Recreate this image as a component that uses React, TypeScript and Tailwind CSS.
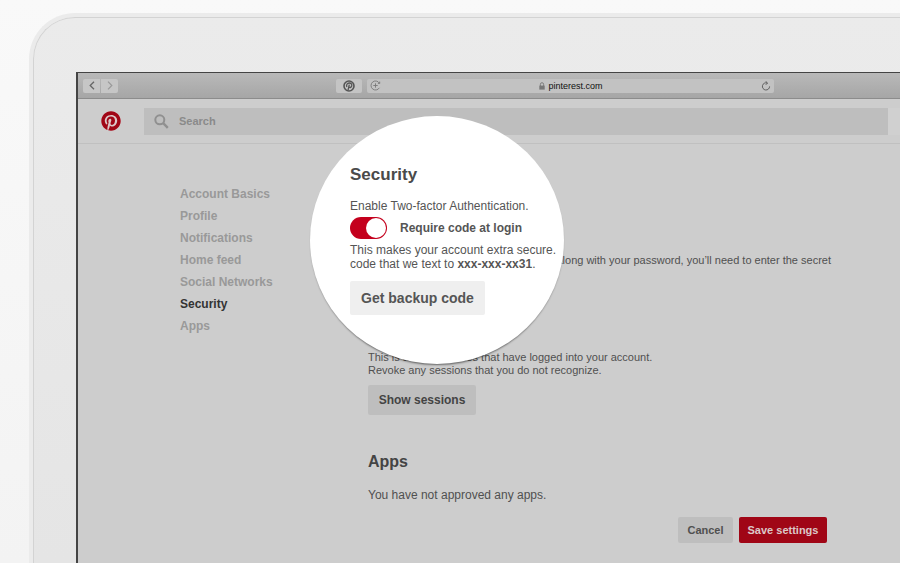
import { FaPinterest } from "react-icons/fa";

const navItems = [
  "Account Basics",
  "Profile",
  "Notifications",
  "Home feed",
  "Social Networks",
  "Security",
  "Apps",
];

function BrowserBar() {
  return (
    <div className="flex h-[26px] items-center border-b border-[#8c8c8c] bg-linear-to-b from-[#b9b9b9] to-[#a6a6a6] pl-[5px] pr-[126px]">
      <div className="flex gap-px">
        <button
          aria-label="Back"
          className="flex h-[14px] w-[17px] items-center justify-center rounded-l-xs bg-[#c6c6c6] text-[#666]"
        >
          <svg width="6" height="9" viewBox="0 0 6 9" fill="none" stroke="currentColor" strokeWidth="1.3">
            <path d="M5 .7 1.2 4.5 5 8.3" />
          </svg>
        </button>
        <button
          aria-label="Forward"
          className="flex h-[14px] w-[17px] items-center justify-center rounded-r-xs bg-[#c6c6c6] text-[#999]"
        >
          <svg width="6" height="9" viewBox="0 0 6 9" fill="none" stroke="currentColor" strokeWidth="1.2">
            <path d="M1 .7 4.8 4.5 1 8.3" />
          </svg>
        </button>
      </div>

      <button
        aria-label="Pin this page"
        className="ml-[218px] flex h-[14px] w-[26px] items-center justify-center rounded-xs bg-[#c4c4c4] text-[#555]"
      >
        <svg width="12" height="12" viewBox="0 0 12 12" fill="none" stroke="currentColor">
          <circle cx="6" cy="6" r="5" strokeWidth="1.6" />
          <path
            d="M3.9 7C2.9 5 4.2 3 6.2 3s3 1.4 2.5 3c-.5 1.7-2.3 2-2.7.9M6.3 4.7 5 10.3"
            strokeWidth="1.3"
          />
        </svg>
      </button>

      {/* Address bar */}
      <div className="ml-[5px] flex h-[14px] flex-1 items-center justify-between rounded-xs bg-[#c2c2c2] px-[3px]">
        <svg width="11" height="11" viewBox="0 0 11 11" fill="none" stroke="#777" strokeWidth="0.9">
          <path d="M9.4 3.2A4.5 4.5 0 1 0 9.4 7.8M5.5 3.3v4.4M3.3 5.5h4.4" />
          <path d="M7.9 3.4h1.8V1.6" />
        </svg>
        <span className="flex items-center gap-[3px] text-[9px] leading-[14px] text-[#111]">
          <svg width="6" height="8" viewBox="0 0 6 8" fill="none">
            <path d="M1.4 4V2.3a1.6 1.6 0 0 1 3.2 0V4" stroke="#777" strokeWidth="0.9" />
            <path d="M.3 3.6h5.4v4H.3z" fill="#777" />
          </svg>
          pinterest.com
        </span>
        <button aria-label="Reload">
          <svg width="10" height="10" viewBox="0 0 10 10" fill="none" stroke="#555" strokeWidth="0.9">
            <path d="M6.2 2A3.6 3.6 0 1 0 8.6 5.4" />
            <path d="M4.6.3 6.6 2 4.8 3.8" />
          </svg>
        </button>
      </div>
    </div>
  );
}

function Header() {
  return (
    <header className="flex h-[45px] items-center border-b border-[#c0c0c0] pl-[23px]">
      <a href="#home" aria-label="Pinterest" className="rounded-full bg-[#dcc8c9] text-[#a00616]">
        <FaPinterest size={20} />
      </a>
      <label className="ml-[23px] flex h-[27px] flex-1 items-center bg-[#bebebe] pl-[10px]">
        <svg width="15" height="15" viewBox="0 0 15 15" fill="none" stroke="#909090">
          <circle cx="5.8" cy="5.8" r="4.5" strokeWidth="2" />
          <path d="m9.2 9.2 4.6 4.6" strokeWidth="2.4" />
        </svg>
        <input
          type="search"
          aria-label="Search"
          placeholder="Search"
          className="ml-[10px] min-w-0 flex-1 bg-transparent text-[11px] font-bold outline-none placeholder:text-[#8a8a8a]"
        />
      </label>
      <div className="h-[27px] w-3 bg-[#d0d0d0]" />
    </header>
  );
}

function Sidebar() {
  return (
    <nav className="flex w-[188px] flex-col pt-[39px] text-[12px] font-bold leading-[22px] text-[#999]">
      {navItems.map((item) => (
        <a
          key={item}
          href={"#" + item.toLowerCase().replace(" ", "-")}
          className={item === "Security" ? "text-[#333]" : ""}
        >
          {item}
        </a>
      ))}
    </nav>
  );
}

// Magnified part of the settings page
function Lens() {
  return (
    <div className="absolute left-[310px] top-[116px] h-[248px] w-[254px] rounded-[50%] bg-white pl-10 pt-[47px] text-[#555] shadow-[0_2px_2px_-1px_rgba(0,0,0,0.5)]">
      <h2 className="text-[17px] font-bold leading-6 text-[#4a4a4a]">Security</h2>
      <p className="mt-3 whitespace-nowrap text-[12px] leading-[14px]">
        Enable Two-factor Authentication.
      </p>
      <label className="mt-1 flex items-center gap-[13px] text-[12px] font-bold leading-[22px]">
        <input
          type="checkbox"
          defaultChecked
          className="flex h-[22px] w-[37px] appearance-none items-center justify-end rounded-full bg-[#c4001d] pr-px before:size-5 before:rounded-full before:bg-white before:content-['']"
        />
        Require code at login
      </label>
      <p className="mt-1 whitespace-nowrap text-[12px] leading-[14px]">
        This makes your account extra secure.
        <br />
        code that we text to <b>xxx-xxx-xx31</b>.
      </p>
      <button className="mt-[10px] h-[34px] w-[135px] rounded-xs bg-[#efefef] text-[14px] font-bold">
        Get backup code
      </button>
    </div>
  );
}

export default function App() {
  return (
    <div className="relative flex h-screen flex-col overflow-hidden bg-linear-to-b from-[#f9f9f9] to-[#f3f3f3] pl-[29px] pt-[13px] font-['Liberation_Sans',Arial,sans-serif]">
      {/* Laptop lid */}
      <div className="flex flex-1 flex-col rounded-tl-[46px] border-l-4 border-t-4 border-[#ebebeb]">
        <div className="flex flex-1 flex-col rounded-tl-[42px] border-l border-t border-[#d3d3d3] bg-linear-to-b from-[#ebebeb] to-[#e5e5e5] pl-[42px] pt-[54px]">
          {/* Screen */}
          <div className="flex-1 border-l-2 border-t border-[#444] bg-[#cdcdcd]">
            <BrowserBar />
            <Header />
            <div className="flex pl-[102px]">
              <Sidebar />
              <main className="flex-1 pr-[69px] pt-[110px] text-[11px] leading-[13px] text-[#505050]">
                <p className="text-right">along with your password, you’ll need to enter the secret</p>
                <p className="mt-[84px]">
                  This is a list of devices that have logged into your account.
                  <br />
                  Revoke any sessions that you do not recognize.
                </p>
                <button className="mt-2 h-[30px] w-[108px] rounded-xs bg-[#bebebe] text-[12px] font-bold text-[#444]">
                  Show sessions
                </button>

                <h2 className="mt-[37px] text-[16px] font-bold leading-5 text-[#444]">Apps</h2>
                <p className="mt-4 text-[12px] leading-[14px]">You have not approved any apps.</p>

                <div className="mt-[15px] flex justify-end gap-[6px] pr-1 text-[11px] font-bold">
                  <button className="h-[26px] w-[55px] rounded-xs bg-[#bebebe] text-[#505050]">Cancel</button>
                  <button className="h-[26px] w-[88px] rounded-xs bg-[#a00616] text-[#dcc8c9]">
                    Save settings
                  </button>
                </div>
              </main>
            </div>
          </div>
        </div>
      </div>
      <Lens />
    </div>
  );
}
